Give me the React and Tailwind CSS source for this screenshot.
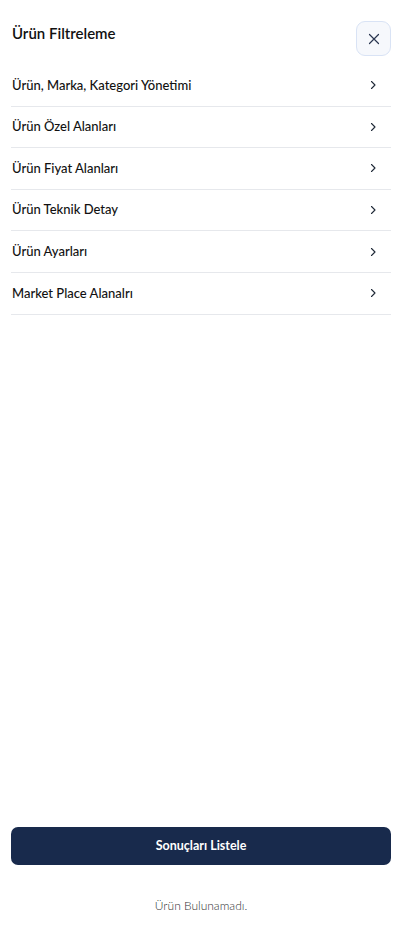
import React from 'react';

const items = [
  'Ürün, Marka, Kategori Yönetimi',
  'Ürün Özel Alanları',
  'Ürün Fiyat Alanları',
  'Ürün Teknik Detay',
  'Ürün Ayarları',
  'Market Place Alanalrı',
];

function Chevron() {
  return (
    <svg width="10" height="10" viewBox="0 0 10 10" fill="none" className="text-[#1f2937]">
      <path d="M3.5 1.5 L7 5 L3.5 8.5" stroke="currentColor" strokeWidth="1.1" strokeLinecap="round" strokeLinejoin="round" />
    </svg>
  );
}

export default function App() {
  return (
    <div className="h-[938px] bg-white flex flex-col pl-[11px] pr-[20px] font-['Lato',sans-serif] text-[#111]">
      {/* Header */}
      <header className="flex items-start justify-between pt-[21px]">
        <h1 className="text-[15px] font-semibold pl-px pt-[1px]">Ürün Filtreleme</h1>
        <button className="w-[35px] h-[35px] rounded-[9px] border border-[#d9e3f5] bg-[#f6f8fc] flex items-center justify-center">
          <svg width="12" height="12" viewBox="0 0 12 12" fill="none" className="text-[#2a3550]">
            <path d="M1.5 1.5 L10.5 10.5 M10.5 1.5 L1.5 10.5" stroke="currentColor" strokeWidth="1.2" strokeLinecap="round" />
          </svg>
        </button>
      </header>

      {/* Menu */}
      <nav className="mt-[9px]">
        {items.map((label) => (
          <button
            key={label}
            className="w-full h-[41.6px] flex items-center justify-between border-b border-[#e6e8ec] pl-px pr-[13px]"
          >
            <span className="text-[13px] font-medium">{label}</span>
            <Chevron />
          </button>
        ))}
      </nav>

      <div className="flex-1" />

      {/* Footer */}
      <button className="h-[38px] rounded-[7px] bg-[#182a4c] text-white text-[12.5px] font-bold">
        Sonuçları Listele
      </button>
      <p className="text-center text-[12px] font-light text-[#333] mt-[32px] mb-[23px]">Ürün Bulunamadı.</p>
    </div>
  );
}
